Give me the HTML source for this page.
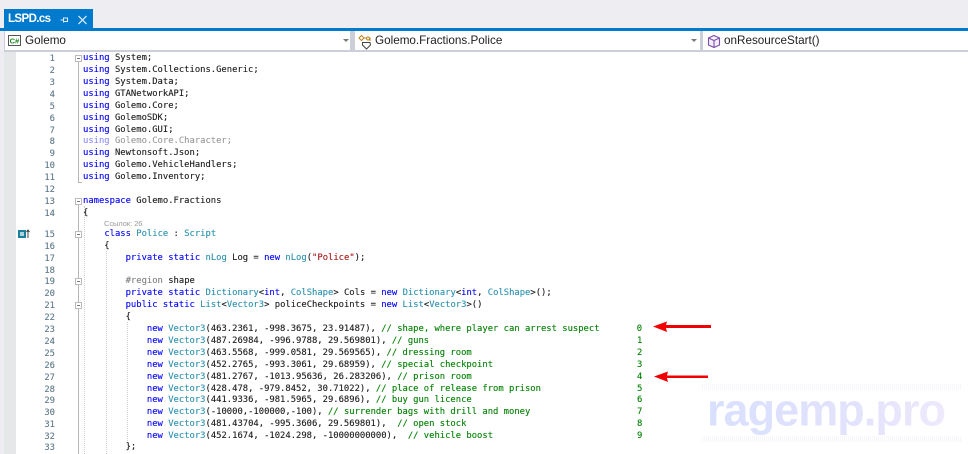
<!DOCTYPE html>
<html>
<head>
<meta charset="utf-8">
<style>
html,body{margin:0;padding:0;width:968px;height:454px;overflow:hidden;background:#fff}
body{position:relative;font-family:"Liberation Sans",sans-serif}
.a{position:absolute}
.w{position:absolute;left:0;top:1px;width:968px;height:453px}
.l,.n,.z{position:absolute;font-family:"DejaVu Sans Mono","Liberation Mono",monospace;font-size:8.85px;line-height:12px;height:12px;white-space:pre;color:#1a1a1a;-webkit-text-stroke:.12px currentColor}
.l{left:83px}
.n{left:30px;width:25px;text-align:right;color:#5f7a8a}
.z{left:637px;color:#008000}
.k{color:#0000ff}.t{color:#2b91af}.c{color:#008000}.s{color:#a31515}.g{color:#808080}
.d{opacity:.45}
.box{position:absolute;left:75px;width:7px;height:7px;border:1px solid #bbb;box-sizing:border-box;background:#fff}
.box:after{content:"";position:absolute;left:1px;top:2px;width:3px;height:1px;background:#777}
.v{position:absolute;width:1px;background:#b5b5b5;left:78px}
.dot{position:absolute;width:0;border-left:1px dotted #cfcfcf}
.nav{position:absolute;top:31px;height:19px;background:#fff;font-size:11.7px;line-height:19px;color:#1e1e1e}
.ar{position:absolute;top:39px;width:0;height:0;border-left:3px solid transparent;border-right:3px solid transparent;border-top:3px solid #777}
</style>
</head>
<body>
<div class="a" style="left:0;top:0;width:968px;height:28px;background:#eeeef2"></div>
<div class="a" style="left:4px;top:9px;width:89px;height:19px;background:#007acc"></div>
<div class="a" style="left:8px;top:9px;height:19px;line-height:20px;font-size:11.5px;letter-spacing:-.6px;font-weight:bold;color:#fff">LSPD.cs</div>
<svg class="a" style="left:58px;top:13px" width="34" height="13" viewBox="0 0 34 13">
<path d="M2.5 7H5.5M5.5 4.5V9.5M5.5 5H9.5V8.5H5.5" fill="none" stroke="#dcecf8" stroke-width="1"/>
<path d="M20.5 3L28.5 11M28.5 3L20.5 11" stroke="#cfe5f5" stroke-width="1.3" fill="none"/>
</svg>
<div class="a" style="left:0;top:28px;width:968px;height:3px;background:#007acc"></div>
<div class="a" style="left:0;top:31px;width:968px;height:21px;background:#ccced8"></div>
<div class="a" style="left:0;top:31px;width:4px;height:423px;background:#eeeef2"></div>

<div class="nav" style="left:5px;width:345px"><span style="position:absolute;left:20px;top:0">Golemo</span></div>
<svg class="a" style="left:8px;top:35px" width="14" height="12" viewBox="0 0 14 12"><rect x=".5" y=".5" width="12" height="10" fill="#fff" stroke="#555"/><text x="1.6" y="8.5" font-family="Liberation Sans" font-weight="bold" font-size="7.5" fill="#1c8a1c">C#</text></svg>
<div class="ar" style="left:343px"></div>

<div class="nav" style="left:355px;width:345px"><span style="position:absolute;left:20px;top:0">Golemo.Fractions.Police</span></div>
<svg class="a" style="left:357px;top:34px" width="18" height="16" viewBox="0 0 18 16">
<path d="M2 4L4.5 1.5L7 4L4.5 6.5Z" fill="#fff" stroke="#b8871f"/>
<path d="M7 4H13V7" fill="none" stroke="#b8871f"/>
<circle cx="11" cy="4.5" r="1.5" fill="#fff" stroke="#b8871f"/>
<path d="M5.5 8.5H13L13.5 11L9.5 15L5.5 11Z" fill="#fff" stroke="#444"/>
</svg>
<div class="ar" style="left:691px"></div>

<div class="nav" style="left:703px;width:265px"><span style="position:absolute;left:21px;top:0">onResourceStart()</span></div>
<svg class="a" style="left:707px;top:34px" width="14" height="15" viewBox="0 0 14 15">
<path d="M7 1.5L12.5 4V11L7 13.5L1.5 11V4ZM1.5 4L7 6.5L12.5 4M7 6.5V13.5" fill="#f3eefa" stroke="#7b4fa8" stroke-width="1.1"/>
</svg>

<div class="a" style="left:4px;top:52px;width:12px;height:402px;background:#e6e7e8"></div>

<!-- outlining -->
<div class="v" style="top:62px;height:121px"></div>
<div class="a" style="left:78px;top:182px;width:4px;height:1px;background:#b5b5b5"></div>
<div class="v" style="top:205px;height:249px"></div>
<div class="box" style="top:55px"></div>
<div class="box" style="top:198px"></div>
<div class="box" style="top:231px"></div>
<div class="box" style="top:278px"></div>
<div class="box" style="top:302px"></div>
<div class="dot" style="left:84px;top:206px;height:248px"></div>
<div class="dot" style="left:106px;top:251px;height:203px"></div>
<div class="dot" style="left:127px;top:322px;height:121px"></div>

<!-- glyph -->
<div class="a" style="left:18px;top:230px;width:8px;height:8px;background:#1b7f9c"></div>
<div class="a" style="left:20px;top:232px;width:4px;height:4px;background:#a9d4e3"></div>
<svg class="a" style="left:26px;top:229px" width="4" height="10" viewBox="0 0 4 10"><path d="M2 1V9M.5 3L2 1L3.5 3" fill="none" stroke="#333" stroke-width=".9"/></svg>

<div class="w">
<div class="n" style="top:52px">1</div><div class="l" style="top:51px"><span class="k">using</span> System;</div>
<div class="n" style="top:64px">2</div><div class="l" style="top:63px"><span class="k">using</span> System.Collections.Generic;</div>
<div class="n" style="top:76px">3</div><div class="l" style="top:75px"><span class="k">using</span> System.Data;</div>
<div class="n" style="top:88px">4</div><div class="l" style="top:87px"><span class="k">using</span> GTANetworkAPI;</div>
<div class="n" style="top:100px">5</div><div class="l" style="top:99px"><span class="k">using</span> Golemo.Core;</div>
<div class="n" style="top:112px">6</div><div class="l" style="top:111px"><span class="k">using</span> GolemoSDK;</div>
<div class="n" style="top:124px">7</div><div class="l" style="top:123px"><span class="k">using</span> Golemo.GUI;</div>
<div class="n" style="top:135px">8</div><div class="l d" style="top:134px"><span class="k">using</span> Golemo.Core.Character;</div>
<div class="n" style="top:147px">9</div><div class="l" style="top:146px"><span class="k">using</span> Newtonsoft.Json;</div>
<div class="n" style="top:159px">10</div><div class="l" style="top:158px"><span class="k">using</span> Golemo.VehicleHandlers;</div>
<div class="n" style="top:171px">11</div><div class="l" style="top:170px"><span class="k">using</span> Golemo.Inventory;</div>
<div class="n" style="top:183px">12</div>
<div class="n" style="top:195px">13</div><div class="l" style="top:194px"><span class="k">namespace</span> Golemo.Fractions</div>
<div class="n" style="top:207px">14</div><div class="l" style="top:206px">{</div>
<div class="a" style="left:104px;top:218px;font-size:7.4px;line-height:10px;color:#999">Ссылок: 26</div>
<div class="n" style="top:228px">15</div><div class="l" style="top:227px">    <span class="k">class</span> <span class="t">Police</span> : <span class="t">Script</span></div>
<div class="n" style="top:240px">16</div><div class="l" style="top:239px">    {</div>
<div class="n" style="top:252px">17</div><div class="l" style="top:251px">        <span class="k">private</span> <span class="k">static</span> <span class="t">nLog</span> Log = <span class="k">new</span> <span class="t">nLog</span>(<span class="s">"Police"</span>);</div>
<div class="n" style="top:264px">18</div>
<div class="n" style="top:275px">19</div><div class="l" style="top:274px">        <span class="g">#region</span> shape</div>
<div class="n" style="top:287px">20</div><div class="l" style="top:286px">        <span class="k">private</span> <span class="k">static</span> <span class="t">Dictionary</span>&lt;<span class="k">int</span>, <span class="t">ColShape</span>&gt; Cols = <span class="k">new</span> <span class="t">Dictionary</span>&lt;<span class="k">int</span>, <span class="t">ColShape</span>&gt;();</div>
<div class="n" style="top:299px">21</div><div class="l" style="top:298px">        <span class="k">public</span> <span class="k">static</span> <span class="t">List</span>&lt;<span class="t">Vector3</span>&gt; policeCheckpoints = <span class="k">new</span> <span class="t">List</span>&lt;<span class="t">Vector3</span>&gt;()</div>
<div class="n" style="top:311px">22</div><div class="l" style="top:310px">        {</div>
<div class="n" style="top:323px">23</div><div class="l" style="top:322px">            <span class="k">new</span> <span class="t">Vector3</span>(463.2361, -998.3675, 23.91487), <span class="c">// shape, where player can arrest suspect       0</span></div>
<div class="n" style="top:335px">24</div><div class="l" style="top:334px">            <span class="k">new</span> <span class="t">Vector3</span>(487.26984, -996.9788, 29.569801), <span class="c">// guns</span></div>
<div class="n" style="top:347px">25</div><div class="l" style="top:346px">            <span class="k">new</span> <span class="t">Vector3</span>(463.5568, -999.0581, 29.569565), <span class="c">// dressing room</span></div>
<div class="n" style="top:359px">26</div><div class="l" style="top:358px">            <span class="k">new</span> <span class="t">Vector3</span>(452.2765, -993.3061, 29.68959), <span class="c">// special checkpoint</span></div>
<div class="n" style="top:371px">27</div><div class="l" style="top:370px">            <span class="k">new</span> <span class="t">Vector3</span>(481.2767, -1013.95636, 26.283206), <span class="c">// prison room</span></div>
<div class="n" style="top:383px">28</div><div class="l" style="top:382px">            <span class="k">new</span> <span class="t">Vector3</span>(428.478, -979.8452, 30.71022), <span class="c">// place of release from prison</span></div>
<div class="n" style="top:394px">29</div><div class="l" style="top:393px">            <span class="k">new</span> <span class="t">Vector3</span>(441.9336, -981.5965, 29.6896), <span class="c">// buy gun licence</span></div>
<div class="n" style="top:406px">30</div><div class="l" style="top:405px">            <span class="k">new</span> <span class="t">Vector3</span>(-10000,-100000,-100), <span class="c">// surrender bags with drill and money</span></div>
<div class="n" style="top:418px">31</div><div class="l" style="top:417px">            <span class="k">new</span> <span class="t">Vector3</span>(481.43704, -995.3606, 29.569801),  <span class="c">// open stock</span></div>
<div class="n" style="top:430px">32</div><div class="l" style="top:429px">            <span class="k">new</span> <span class="t">Vector3</span>(452.1674, -1024.298, -10000000000),  <span class="c">// vehicle boost</span></div>
<div class="n" style="top:441px">33</div><div class="l" style="top:440px">        };</div>

<div class="z" style="top:334px">1</div>
<div class="z" style="top:346px">2</div>
<div class="z" style="top:358px">3</div>
<div class="z" style="top:370px">4</div>
<div class="z" style="top:382px">5</div>
<div class="z" style="top:393px">6</div>
<div class="z" style="top:405px">7</div>
<div class="z" style="top:417px">8</div>
<div class="z" style="top:429px">9</div>
</div>

<!-- arrows -->
<svg class="a" style="left:650px;top:318px" width="70" height="70" viewBox="0 0 70 70">
<path d="M3 8.5L17 3.5L16 7H61V10H16L17 14Z" fill="#f00000"/>
<path d="M4 58.5L18 53.5L17 57.5H58V60H17L18 64Z" fill="#f00000"/>
</svg>

<!-- watermark -->
<div class="a" style="left:702px;top:384px;width:260px;height:6px;background:repeating-linear-gradient(90deg,#f7f7fb 0 1px,#fff 1px 2px)"></div>
<div class="a" style="left:702px;top:436px;width:260px;height:6px;background:repeating-linear-gradient(90deg,#f7f7fb 0 1px,#fff 1px 2px)"></div>
<svg class="a" style="left:690px;top:380px" width="278" height="74" viewBox="0 0 278 74">
<defs><linearGradient id="w" x1="0" x2="1" y1="0" y2="0"><stop offset="0" stop-color="#d8e0fe"/><stop offset=".6" stop-color="#e2e2fc"/><stop offset="1" stop-color="#eee9fc"/></linearGradient></defs>
<text x="17" y="45.5" font-family="Liberation Sans" font-weight="bold" font-size="45" fill="url(#w)" textLength="239" lengthAdjust="spacing">ragemp.pro</text>
</svg>
</body>
</html>
